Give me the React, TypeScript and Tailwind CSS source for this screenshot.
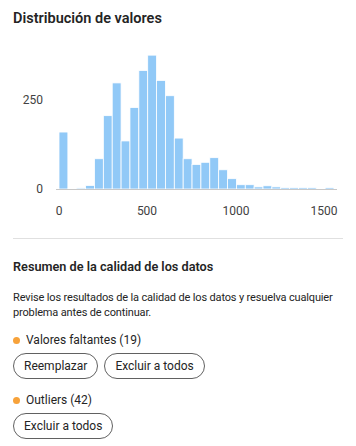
import React from 'react';

const counts = [160, 0, 3, 10, 85, 206, 298, 135, 229, 333, 376, 305, 262, 143, 85, 69, 75, 88, 54, 29, 12, 12, 6, 9, 6, 4, 4, 4, 4, 0, 4];

const X0 = 59;
const BIN_W = 8.87;
const BASE = 190;
const PX_PER_UNIT = 89 / 250;

function Histogram() {
  return (
    <svg width="356" height="196" viewBox="0 30 356 196" className="block">
      {counts.map((c, i) =>
        c > 0 ? (
          <rect
            key={i}
            x={X0 + i * BIN_W}
            y={BASE - c * PX_PER_UNIT}
            width={BIN_W}
            height={c * PX_PER_UNIT}
            fill="#91c9f7"
            stroke="#ffffff"
            strokeWidth={0.8}
          />
        ) : null
      )}
      <line x1={56} x2={337} y1={BASE + 0.5} y2={BASE + 0.5} stroke="#c8c8c8" strokeWidth={1} />
      <g fontFamily="Roboto, 'Liberation Sans', sans-serif" fontSize="12" fill="#424242">
        <text x={43} y={105} textAnchor="end">250</text>
        <text x={43} y={194} textAnchor="end">0</text>
        <text x={59} y={216} textAnchor="middle">0</text>
        <text x={147} y={216} textAnchor="middle">500</text>
        <text x={236} y={216} textAnchor="middle">1000</text>
        <text x={324} y={216} textAnchor="middle">1500</text>
      </g>
    </svg>
  );
}

function Pill({ label }: { label: string }) {
  return (
    <button className="h-[26px] px-[10px] rounded-full border border-[#616161] bg-white text-[12px] text-[#242424] leading-none">
      {label}
    </button>
  );
}

function Issue({ title, actions }: { title: string; actions: string[] }) {
  return (
    <div className="flex flex-col gap-[5px]">
      <div className="flex items-center gap-[6px] text-[12px] text-[#242424] leading-4">
        <span className="w-[7px] h-[7px] rounded-full bg-[#f7a23a]" />
        <span>{title}</span>
      </div>
      <div className="flex gap-[6px]">
        {actions.map(a => (
          <Pill key={a} label={a} />
        ))}
      </div>
    </div>
  );
}

export default function App() {
  return (
    <div className="w-[356px] h-[446px] bg-white overflow-hidden text-[#242424]" style={{ fontFamily: "Roboto, 'Liberation Sans', sans-serif" }}>
      <div className="px-[13px] pt-[9px]">
        <h2 className="text-[14.5px] font-semibold leading-5">Distribución de valores</h2>
      </div>
      <Histogram />
      <div className="mx-[13px] border-t border-[#e0e0e0] mt-[13px]" />
      <div className="px-[13px] pt-[18px] flex flex-col">
        <h3 className="text-[12.7px] font-semibold leading-5">Resumen de la calidad de los datos</h3>
        <p className="text-[11px] leading-[15px] tracking-[-0.15px] mt-[13px]">
          Revise los resultados de la calidad de los datos y resuelva cualquier problema antes de continuar.
        </p>
        <div className="mt-[12px] flex flex-col gap-[13px]">
          <Issue title="Valores faltantes (19)" actions={['Reemplazar', 'Excluir a todos']} />
          <Issue title="Outliers (42)" actions={['Excluir a todos']} />
        </div>
      </div>
    </div>
  );
}
